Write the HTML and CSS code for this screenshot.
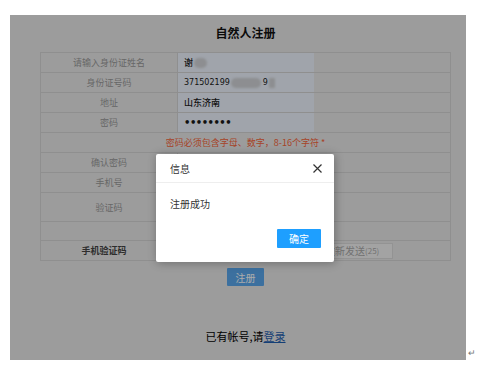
FILE: index.html
```html
<!DOCTYPE html>
<html lang="zh-CN">
<head>
    <meta charset="UTF-8">
    <title>自然人注册</title>
    <link rel="stylesheet" href="styles.css">
</head>
<body>
    <div class="sheet">
        <div class="shot">
            <div class="page">
                <h1 class="title">自然人注册</h1>
                <div class="form">
                    <div class="row">
                        <div class="label">请输入身份证姓名</div>
                        <div class="field"><span class="input filled">谢<span class="blur blur-name"></span></span></div>
                    </div>
                    <div class="row">
                        <div class="label">身份证号码</div>
                        <div class="field"><span class="input filled thin">371502199<span class="blur blur-id"></span>9<span class="blur blur-end"></span></span></div>
                    </div>
                    <div class="row">
                        <div class="label">地址</div>
                        <div class="field"><span class="input filled">山东济南</span></div>
                    </div>
                    <div class="row">
                        <div class="label">密码</div>
                        <div class="field"><span class="input filled dots">••••••••</span></div>
                    </div>
                    <div class="row notice">密码必须包含字母、数字，8-16个字符 *</div>
                    <div class="row">
                        <div class="label">确认密码</div>
                        <div class="field"></div>
                    </div>
                    <div class="row">
                        <div class="label">手机号</div>
                        <div class="field"></div>
                    </div>
                    <div class="row tall">
                        <div class="label">验证码</div>
                        <div class="field"></div>
                    </div>
                    <div class="row short"></div>
                    <div class="row short last">
                        <div class="label strong">手机验证码</div>
                        <div class="field">
                            <span class="input"></span>
                            <span class="resend">重新发送<small>(25)</small></span>
                        </div>
                    </div>
                </div>
                <button class="submit">注册</button>
                <p class="login">已有帐号,请<a href="#">登录</a></p>
            </div>

            <div class="shade"></div>

            <div class="dialog">
                <div class="dialog-head">
                    <span>信息</span>
                    <svg class="close" width="9" height="9" viewBox="0 0 9 9">
                        <path d="M0.5 0.5 L8.5 8.5 M8.5 0.5 L0.5 8.5" stroke="#333" stroke-width="1.2" fill="none"/>
                    </svg>
                </div>
                <div class="dialog-body">注册成功</div>
                <div class="dialog-foot">
                    <button class="ok">确定</button>
                </div>
            </div>
        </div>
        <span class="mark">↵</span>
    </div>
</body>
</html>
```

FILE: styles.css
```css
* {
    margin: 0;
    padding: 0;
    box-sizing: border-box;
}

body {
    background: #fff;
    font-family: "Noto Sans CJK SC", "Noto Sans", sans-serif;
}

.sheet {
    display: flex;
    align-items: flex-end;
    padding: 15px 0 0 10px;
}

.shot {
    position: relative;
    width: 456px;
    height: 345px;
    background: #e9e9e9;
    overflow: hidden;
}

.page {
    width: 411px;
    margin-left: 30px;
    padding-top: 10px;
    display: flex;
    flex-direction: column;
    align-items: center;
}

.title {
    font-size: 12px;
    line-height: 15px;
    font-weight: bold;
    color: #111;
    margin-bottom: 12px;
}

/* форма */
.form {
    width: 411px;
    border: 1px solid #d6d6d6;
}

.row {
    display: flex;
    height: 20px;
    border-bottom: 1px solid #d6d6d6;
}

.row.tall {
    height: 29px;
}

.row.short {
    height: 19px;
}

.row.last {
    border-bottom: none;
}

.label {
    width: 137px;
    border-right: 1px solid #d6d6d6;
    display: flex;
    align-items: center;
    justify-content: center;
    font-size: 9px;
    color: #9a9a9a;
}

.label.strong {
    font-weight: bold;
    color: #444;
    padding-right: 10px;
}

.field {
    flex: 1;
    display: flex;
    align-items: center;
}

.input {
    width: 136px;
    height: 100%;
    display: flex;
    align-items: center;
    padding-left: 6px;
    font-size: 9px;
    color: #1a1a1a;
    font-weight: 500;
}

.input.filled {
    background: #eff5ff;
}

.input.thin {
    font-family: "DejaVu Sans", sans-serif;
    font-size: 8px;
    font-weight: normal;
}

.input.dots {
    font-family: "DejaVu Sans", sans-serif;
    font-size: 10px;
    font-weight: bold;
    letter-spacing: -0.5px;
}

.blur {
    display: inline-block;
    height: 10px;
    background: #d2d4d8;
    border-radius: 5px;
    filter: blur(1px);
}

.blur-name {
    width: 13px;
    margin-left: 1px;
}

.blur-id {
    width: 30px;
    margin: 0 2px 0 1px;
}

.blur-end {
    width: 6px;
    margin-left: 1px;
    border-radius: 1px;
}

.notice {
    justify-content: center;
    align-items: center;
    font-size: 9px;
    color: #f8653a;
}

.resend {
    margin-left: 5px;
    height: 16px;
    width: 74px;
    border: 1px solid #dcdcdc;
    background: #f4f4f4;
    display: flex;
    align-items: center;
    padding-left: 5px;
    font-size: 10px;
    color: #aaa;
}

.resend small {
    font-size: 8px;
}

.submit {
    margin-top: 7px;
    width: 37px;
    height: 18px;
    border: none;
    border-radius: 1px;
    background: #5aa8ee;
    color: #fff;
    font-family: inherit;
    font-size: 10px;
}

.login {
    margin-top: 43px;
    font-size: 11px;
    line-height: 15px;
    color: #000;
}

.login a {
    color: #1f5fb0;
}

/* затемнение и диалог */
.shade {
    position: absolute;
    inset: 0;
    background: rgba(0, 0, 0, 0.33);
}

.dialog {
    position: absolute;
    left: 146px;
    top: 139px;
    width: 178px;
    height: 108px;
    background: #fff;
    border-radius: 2px;
    box-shadow: 1px 1px 10px rgba(0, 0, 0, 0.3);
    display: flex;
    flex-direction: column;
}

.dialog-head {
    height: 29px;
    border-bottom: 1px solid #eee;
    display: flex;
    align-items: center;
    justify-content: space-between;
    padding: 0 12px 0 14px;
    font-size: 10px;
    color: #333;
}

.dialog-body {
    flex: 1;
    padding: 13px 14px 0;
    font-size: 10px;
    line-height: 15px;
    color: #333;
}

.dialog-foot {
    display: flex;
    justify-content: flex-end;
    padding: 0 13px 14px;
}

.ok {
    width: 44px;
    height: 19px;
    border: none;
    border-radius: 1px;
    background: #1e9fff;
    color: #fff;
    font-family: inherit;
    font-size: 10px;
}

.mark {
    font-size: 9px;
    line-height: 10px;
    color: #777;
    margin: 0 0 2px 2px;
}
```
